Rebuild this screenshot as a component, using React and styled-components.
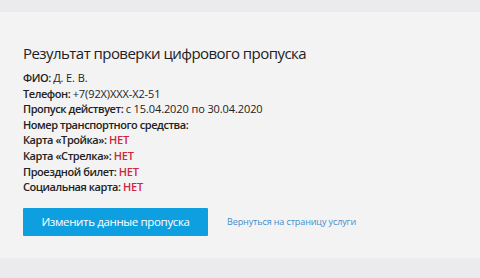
import React from "react";
import styled, { createGlobalStyle } from "styled-components";

const GlobalStyle = createGlobalStyle`
  html, body { margin: 0; padding: 0; background: #ebebee; }
  body { font-family: "Open Sans", "Noto Sans", sans-serif; color: #222; }
`;

const Page = styled.div`
  width: 480px;
  height: 278px;
  padding-top: 12px;
  box-sizing: border-box;
`;

const Card = styled.section`
  background: #f3f3f4;
  height: 246px;
  padding: 31px 23px 0;
  box-sizing: border-box;
`;

const Title = styled.h1`
  margin: 0 0 7px;
  font-size: 15px;
  font-weight: 500;
  color: #222;
  letter-spacing: -0.55px;
`;

const Info = styled.div`
  display: flex;
  flex-direction: column;
  font-size: 11px;
  line-height: 15.6px;
`;

const Row = styled.div`
  font-weight: 600;
  letter-spacing: -0.45px;
`;

const Value = styled.span`
  font-weight: ${(p) => (p.$alert ? 600 : 400)};
  letter-spacing: ${(p) => (p.$alert ? "-0.2px" : "-0.1px")};
  color: ${(p) => (p.$alert ? "#d0263a" : "#222")};
`;

const Actions = styled.div`
  display: flex;
  align-items: center;
  gap: 19px;
  margin-top: 13px;
`;

const Button = styled.button`
  width: 185px;
  height: 28px;
  border: 0;
  border-radius: 1px;
  background: #0e9fe1;
  color: #fff;
  font-family: inherit;
  font-size: 11.5px;
  font-weight: 500;
  letter-spacing: -0.35px;
  cursor: pointer;
`;

const Link = styled.a`
  color: #3f8ecb;
  font-size: 9px;
  letter-spacing: -0.1px;
  text-decoration: none;
`;

const rows = [
  ["ФИО:", "Д. Е. В."],
  ["Телефон:", "+7(92X)XXX-X2-51"],
  ["Пропуск действует:", "с 15.04.2020 по 30.04.2020"],
  ["Номер транспортного средства:", ""],
  ["Карта «Тройка»:", "НЕТ", true],
  ["Карта «Стрелка»:", "НЕТ", true],
  ["Проездной билет:", "НЕТ", true],
  ["Социальная карта:", "НЕТ", true],
];

export default function App() {
  return (
    <Page>
      <GlobalStyle />
      <Card>
        <Title>Результат проверки цифрового пропуска</Title>
        <Info>
          {rows.map(([label, value, alert]) => (
            <Row key={label}>
              {label} <Value $alert={alert}>{value}</Value>
            </Row>
          ))}
        </Info>
        <Actions>
          <Button>Изменить данные пропуска</Button>
          <Link href="#">Вернуться на страницу услуги</Link>
        </Actions>
      </Card>
    </Page>
  );
}
